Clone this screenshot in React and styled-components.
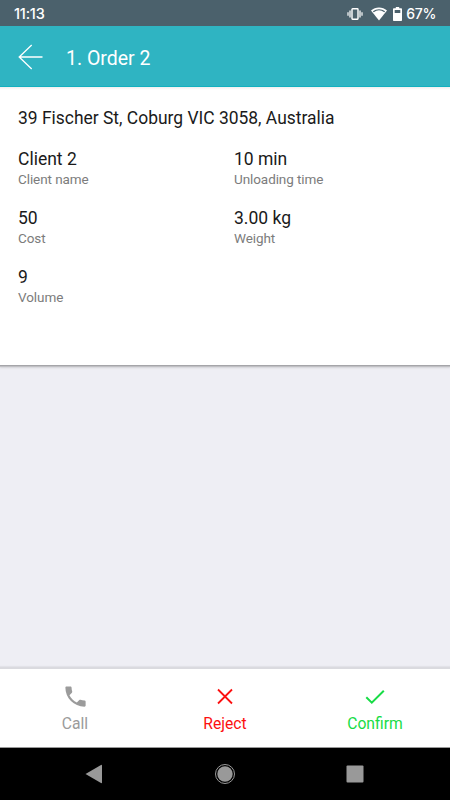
import React from 'react';
import styled, { createGlobalStyle } from 'styled-components';

const GlobalStyle = createGlobalStyle`
  * {
    box-sizing: border-box;
  }

  body {
    margin: 0;
    background: #eeeef4;
    font-family: Roboto, sans-serif;
  }
`;

const Screen = styled.div`
  display: flex;
  flex-direction: column;
  width: 450px;
  height: 800px;
  overflow: hidden;
  background: #eeeef4;
`;

const StatusBar = styled.div`
  display: flex;
  flex: none;
  align-items: center;
  justify-content: space-between;
  height: 26px;
  padding: 1px 14px 0;
  background: #4b616c;
  color: white;
  font-family: Inter, sans-serif;
  line-height: 24px;
`;

const Clock = styled.span`
  font-size: 14.5px;
  font-weight: 500;
  letter-spacing: -0.2px;
`;

const StatusIcons = styled.div`
  display: flex;
  align-items: center;

  svg {
    display: block;
  }
`;

const Battery = styled.span`
  margin-left: 4px;
  font-size: 14px;
  font-weight: 500;
  letter-spacing: -0.3px;
`;

const Header = styled.header`
  display: flex;
  flex: none;
  align-items: center;
  height: 61px;
  padding: 2px 18px 0;
  background: #2fb4c2;
  border-bottom: 1px solid #12b0bf;
  color: white;
`;

const Title = styled.h1`
  margin: 3px 0 0 23px;
  font-size: 19.5px;
  font-weight: 400;
  line-height: 24px;
`;

const Details = styled.section`
  flex: none;
  height: 278px;
  padding: 20px 18px 0;
  background: linear-gradient(#eee, white 3px);
  box-shadow: 0 1px 0 #a5a5a9, 0 2px 1px #c0c0c4, 0 3px 2px #d8d8dd;
`;

const Address = styled.p`
  margin: 0 0 19px;
  color: #1a1a1a;
  font-size: 17.45px;
  line-height: 22px;
  white-space: nowrap;
`;

const Fields = styled.dl`
  display: grid;
  grid-template-columns: 216px 1fr;
  row-gap: 16px;
  margin: 0;
`;

const Field = styled.div`
  display: flex;
  flex-direction: column-reverse;
  justify-content: flex-end;
  height: 43px;
`;

const Label = styled.dt`
  color: #7c7c7c;
  font-size: 13.5px;
  letter-spacing: -0.08px;
  line-height: 19px;
`;

const Value = styled.dd`
  margin: 0;
  color: #1a1a1a;
  font-size: 17.5px;
  line-height: 22px;
`;

const Actions = styled.div`
  display: grid;
  flex: none;
  grid-template-columns: repeat(3, 1fr);
  height: 78px;
  margin-top: auto;
  background: white;
  box-shadow: 0 -2px 0 #dadadf, 0 -3px 1px #e2e2e8;
`;

const Action = styled.button`
  display: flex;
  flex-direction: column;
  align-items: center;
  padding: 14px 0 0;
  background: none;
  border: none;
  color: ${props => props.$color};
  font-family: inherit;
  font-size: 15.7px;
  line-height: 24px;
  cursor: pointer;

  svg {
    display: block;
    margin-bottom: 2px;
  }
`;

const NavBar = styled.nav`
  display: flex;
  flex: none;
  align-items: center;
  justify-content: space-between;
  height: 53px;
  padding: 0 86px 0 85px;
  background: black;
  border-top: 1px solid #999;
`;

const VibrateIcon = () => (
  <svg width="16" height="14" viewBox="0 0 16 14" fill="none" stroke="white">
    <rect x="5" y="1.8" width="6" height="10.4" rx="0.6" strokeWidth="1.4" />
    <path d="M3 3.5v7M13 3.5v7" strokeWidth="1.5" opacity="0.85" />
    <path d="M1 5.2v3.6M15 5.2v3.6" strokeWidth="1.5" opacity="0.8" />
  </svg>
);

const WifiIcon = styled(({ className }) => (
  <svg className={className} width="16" height="14" viewBox="0 0 16 14">
    <path d="M0 3.5C4.5-.5 11.5-.5 16 3.5L8 13.5z" fill="white" />
    <path d="M2.3 4.8C5.7 2.1 10.3 2.1 13.7 4.8" fill="none" stroke="#4b616c" strokeWidth="1.3" />
  </svg>
))`
  margin-left: 8px;
`;

const BatteryIcon = styled(({ className }) => (
  <svg className={className} width="9" height="14" viewBox="0 0 8 14" preserveAspectRatio="none">
    <path d="M2.5 0h3v1.3H7.3q.7 0 .7.7v11.3q0 .7-.7.7H.7q-.7 0-.7-.7V2q0-.7.7-.7h1.8z" fill="white" />
    <path d="M1.5 3h5v3h-5z" fill="#4b616c" />
  </svg>
))`
  margin-left: 6px;
`;

const BackIcon = () => (
  <svg width="25" height="26" viewBox="0 0 25 26" fill="none" stroke="white" strokeWidth="1.3">
    <path d="M13.7 1L1.2 13l12.5 12M1.2 13H24.5" />
  </svg>
);

const CallIcon = () => (
  <svg width="27" height="27" viewBox="0 0 24 24" fill="currentColor">
    <path d="M6.62 10.79c1.44 2.83 3.76 5.14 6.59 6.59l2.2-2.2c.27-.27.67-.36 1.02-.24 1.12.37 2.33.57 3.57.57.55 0 1 .45 1 1V20c0 .55-.45 1-1 1-9.39 0-17-7.61-17-17 0-.55.45-1 1-1h3.5c.55 0 1 .45 1 1 0 1.25.2 2.45.57 3.57.11.35.03.74-.25 1.02l-2.2 2.2z" />
  </svg>
);

const RejectIcon = () => (
  <svg width="27" height="27" viewBox="0 0 27 27" fill="none" stroke="currentColor" strokeWidth="1.8">
    <path d="M6 6.5l14 14M20 6.5l-14 14" />
  </svg>
);

const ConfirmIcon = () => (
  <svg width="27" height="27" viewBox="0 0 27 27" fill="none" stroke="currentColor" strokeWidth="2">
    <path d="M4.3 14.3L9.8 19.7L21.8 7.7" />
  </svg>
);

const fields = [
  { label: 'Client name', value: 'Client 2' },
  { label: 'Unloading time', value: '10 min' },
  { label: 'Cost', value: '50' },
  { label: 'Weight', value: '3.00 kg' },
  { label: 'Volume', value: '9' },
];

const actions = [
  { label: 'Call', color: '#9b9b9b', Icon: CallIcon },
  { label: 'Reject', color: '#fc1010', Icon: RejectIcon },
  { label: 'Confirm', color: '#18dc46', Icon: ConfirmIcon },
];

const App = () => {
  return (
    <Screen>
      <GlobalStyle />
      <StatusBar>
        <Clock>11:13</Clock>
        <StatusIcons>
          <VibrateIcon />
          <WifiIcon />
          <BatteryIcon />
          <Battery>67%</Battery>
        </StatusIcons>
      </StatusBar>

      <Header>
        <BackIcon />
        <Title>1. Order 2</Title>
      </Header>

      <Details>
        <Address>39 Fischer St, Coburg VIC 3058, Australia</Address>
        <Fields>
          {fields.map(({ label, value }) => (
            <Field key={label}>
              <Label>{label}</Label>
              <Value>{value}</Value>
            </Field>
          ))}
        </Fields>
      </Details>

      <Actions>
        {actions.map(({ label, color, Icon }) => (
          <Action key={label} $color={color}>
            <Icon />
            {label}
          </Action>
        ))}
      </Actions>

      <NavBar>
        <svg width="18" height="20" viewBox="0 0 18 20" fill="#999">
          <path d="M.5 10L16 1q1-.5 1 .5v17q0 1-1 .5z" />
        </svg>
        <svg width="22" height="22" viewBox="0 0 22 22" fill="#999">
          <circle cx="11" cy="11" r="7.7" />
          <circle cx="11" cy="11" r="9.5" fill="none" stroke="#999" strokeWidth="1" />
        </svg>
        <svg width="18" height="18" viewBox="0 0 18 18" fill="#999">
          <rect x="0.5" y="0.5" width="17" height="17" rx="1" />
        </svg>
      </NavBar>
    </Screen>
  );
};

export default App;
